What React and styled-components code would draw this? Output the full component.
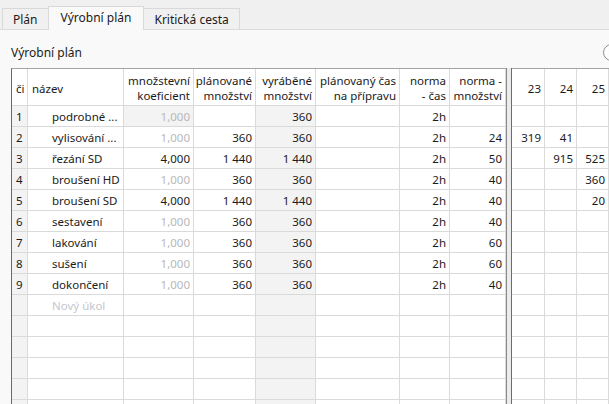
import styled, { createGlobalStyle } from "styled-components";

const GlobalStyle = createGlobalStyle`
  html, body {
    margin: 0;
    padding: 0;
    overflow: hidden;
    background: #f9f9f9;
  }
  body {
    font-family: "Noto Sans", "Segoe UI", sans-serif;
    font-size: 12px;
    color: #1b1b1b;
  }
`;

const Window = styled.div`
  width: 624px;
  height: 404px;
  overflow: hidden;
  display: flex;
  flex-direction: column;
  background: #f9f9f9;
`;

const TabBar = styled.div`
  flex-shrink: 0;
  display: flex;
  align-items: flex-end;
  height: 30px;
  padding-left: 2px;
  box-sizing: border-box;
  background: #f0f0f0;
  border-bottom: 1px solid #dcdcdc;
`;

const Tab = styled.div`
  display: flex;
  align-items: center;
  box-sizing: border-box;
  height: ${(p) => (p.$active ? "24px" : "21px")};
  margin-bottom: ${(p) => (p.$active ? "-1px" : "0")};
  margin-left: -1px;
  padding: ${(p) => (p.$active ? "0 12px 2px" : "0 10px")};
  background: ${(p) => (p.$active ? "#f9f9f9" : "#f0f0f0")};
  border: 1px solid #d9d9d9;
  border-bottom: none;
  position: relative;
  z-index: ${(p) => (p.$active ? 1 : 0)};
  white-space: nowrap;
  &:first-child {
    margin-left: 0;
  }
`;

const Panel = styled.div`
  flex: 1;
  min-height: 0;
  display: flex;
  flex-direction: column;
  padding-left: 11px;
`;

const TitleRow = styled.div`
  flex-shrink: 0;
  display: flex;
  align-items: center;
  justify-content: space-between;
  height: 38px;
  padding-top: 6px;
  box-sizing: border-box;
`;

const RoundButton = styled.div`
  width: 17px;
  height: 17px;
  box-sizing: border-box;
  border-radius: 50%;
  border: 1px solid #8c8c8c;
  background: #fdfdfd;
  margin-right: 4px;
`;

const GridArea = styled.div`
  flex: 1;
  min-height: 0;
  display: flex;
  align-items: stretch;
  overflow: hidden;
`;

const Table = styled.div`
  flex-shrink: 0;
  display: flex;
  flex-direction: column;
  background: #fff;
  border-top: 1px solid #a3a3a3;
  border-left: ${(p) => (p.$first ? "1px solid #6a6a6a" : "none")};
  font-size: 11.5px;
`;

const Splitter = styled.div`
  flex-shrink: 0;
  width: 6px;
  box-sizing: border-box;
  background: #ececec;
  border-left: 1px solid #8a8a8a;
  border-right: 1px solid #6c6c6c;
`;

const Row = styled.div`
  flex-shrink: 0;
  display: grid;
  grid-template-columns: ${(p) => p.$cols};
`;

const Cell = styled.div`
  box-sizing: border-box;
  height: ${(p) => (p.$head ? "37px" : "21px")};
  padding: ${(p) => (p.$head ? "2px 3px 0 4px" : "0 3px 0 4px")};
  padding-left: ${(p) => (p.$indent ? "24px" : undefined)};
  display: flex;
  align-items: center;
  justify-content: ${(p) => (p.$right ? "flex-end" : "flex-start")};
  text-align: ${(p) => (p.$right ? "right" : "left")};
  line-height: 15px;
  white-space: nowrap;
  overflow: hidden;
  border-right: 1px solid #dadada;
  border-bottom: 1px solid #dadada;
  background: ${(p) => (p.$shade ? "#f3f3f3" : "#fff")};
  color: ${(p) => (p.$muted ? "#b8b8b8" : p.$hint ? "#c6c6cc" : "#1b1b1b")};
`;

const leftCols = "16px 96px 70px 62px 60px 84px 50px 56px";
const rightCols = "33px 32px 32px 32px";

const leftHead = [
  { label: "či" },
  { label: "název" },
  { label: "množstevní\nkoeficient", right: true },
  { label: "plánované\nmnožství", right: true },
  { label: "vyráběné\nmnožství", right: true },
  { label: "plánovaný čas\nna přípravu", right: true },
  { label: "norma\n- čas", right: true },
  { label: "norma -\nmnožství", right: true },
];

// the 4th day column is off-screen, so it carries no label
const days = ["23", "24", "25", ""];

const tasks = [
  { name: "podrobné ...", koef: "1,000", plan: "", vyr: "360", nm: "", d: ["", "", "", ""], first: true },
  { name: "vylisování ...", koef: "1,000", plan: "360", vyr: "360", nm: "24", d: ["319", "41", "", ""] },
  { name: "řezání SD", koef: "4,000", plan: "1 440", vyr: "1 440", nm: "50", d: ["", "915", "525", ""] },
  { name: "broušení HD", koef: "1,000", plan: "360", vyr: "360", nm: "40", d: ["", "", "360", ""] },
  { name: "broušení SD", koef: "4,000", plan: "1 440", vyr: "1 440", nm: "40", d: ["", "", "20", ""] },
  { name: "sestavení", koef: "1,000", plan: "360", vyr: "360", nm: "40", d: ["", "", "", ""] },
  { name: "lakování", koef: "1,000", plan: "360", vyr: "360", nm: "60", d: ["", "", "", ""] },
  { name: "sušení", koef: "1,000", plan: "360", vyr: "360", nm: "60", d: ["", "", "", ""] },
  { name: "dokončení", koef: "1,000", plan: "360", vyr: "360", nm: "40", d: ["", "", "", ""] },
];

const EMPTY_ROWS = 5;

function Lines({ text }) {
  return (
    <span>
      {text.split("\n").map((t, i) => (
        <div key={i}>{t}</div>
      ))}
    </span>
  );
}

function LeftGrid() {
  return (
    <Table $first>
      <Row $cols={leftCols}>
        {leftHead.map((h) => (
          <Cell key={h.label} $head $right={h.right}>
            <Lines text={h.label} />
          </Cell>
        ))}
      </Row>
      {tasks.map((t, i) => (
        <Row key={t.name} $cols={leftCols}>
          <Cell $shade>{i + 1}</Cell>
          <Cell $indent>{t.name}</Cell>
          <Cell $right $muted={t.koef === "1,000"} $shade={t.first}>{t.koef}</Cell>
          <Cell $right>{t.plan}</Cell>
          <Cell $right $shade>{t.vyr}</Cell>
          <Cell $right />
          <Cell $right>2h</Cell>
          <Cell $right>{t.nm}</Cell>
        </Row>
      ))}
      <Row $cols={leftCols}>
        <Cell $shade />
        <Cell $indent $hint>Nový úkol</Cell>
        <Cell />
        <Cell />
        <Cell $shade />
        <Cell />
        <Cell />
        <Cell />
      </Row>
      {Array.from({ length: EMPTY_ROWS }).map((_, i) => (
        <Row key={"e" + i} $cols={leftCols}>
          <Cell $shade />
          <Cell />
          <Cell />
          <Cell />
          <Cell $shade />
          <Cell />
          <Cell />
          <Cell />
        </Row>
      ))}
    </Table>
  );
}

function RightGrid() {
  return (
    <Table>
      <Row $cols={rightCols}>
        {days.map((d, j) => (
          <Cell key={j} $head $right>{d}</Cell>
        ))}
      </Row>
      {tasks.map((t) => (
        <Row key={t.name} $cols={rightCols}>
          {t.d.map((v, j) => (
            <Cell key={j} $right>{v}</Cell>
          ))}
        </Row>
      ))}
      {Array.from({ length: EMPTY_ROWS + 1 }).map((_, i) => (
        <Row key={"e" + i} $cols={rightCols}>
          {days.map((_, j) => (
            <Cell key={j} />
          ))}
        </Row>
      ))}
    </Table>
  );
}

export default function App() {
  return (
    <Window>
      <GlobalStyle />
      <TabBar>
        <Tab>Plán</Tab>
        <Tab $active>Výrobní plán</Tab>
        <Tab>Kritická cesta</Tab>
      </TabBar>
      <Panel>
        <TitleRow>
          <span>Výrobní plán</span>
          <RoundButton />
        </TitleRow>
        <GridArea>
          <LeftGrid />
          <Splitter />
          <RightGrid />
        </GridArea>
      </Panel>
    </Window>
  );
}
